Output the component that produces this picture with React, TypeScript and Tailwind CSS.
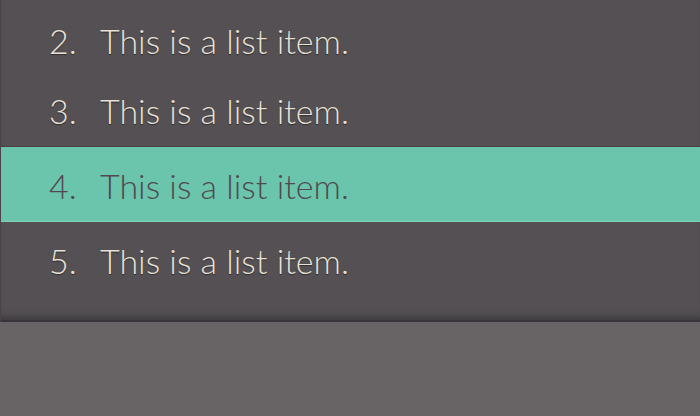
import React from 'react';

const items = [
  { n: 2, active: false, h: 'h-[73px]', pad: 'pt-[8px]' },
  { n: 3, active: false, h: 'h-[73px]', pad: 'pt-[2px]' },
  { n: 4, active: true, h: 'h-[76px]', pad: 'pt-[3px]' },
  { n: 5, active: false, h: 'h-[74px]', pad: 'pt-[3px]' },
];

const App = () => {
  return (
    <div className="w-[700px] h-[416px] overflow-hidden flex flex-col bg-[#686365] font-['Lato','Liberation_Sans',sans-serif]">
      {/* list panel */}
      <div className="h-[322px] flex flex-col bg-[#545053] border-l border-[#48444a] shadow-[inset_0_-8px_8px_-6px_rgba(0,0,0,0.35)] border-b-2 border-b-[#38343a]">
        {items.map((item) => (
          <div
            key={item.n}
            className={
              item.active
                ? `${item.h} ${item.pad} flex items-center bg-[#6bc5ac] border-t border-t-[#4b3f47] border-b border-b-[#7fd0b8] text-[#51494f]`
                : `${item.h} ${item.pad} flex items-center text-[#e9e1d6] [text-shadow:0_1px_1px_rgba(0,0,0,0.45)]`
            }
          >
            <span className="w-[51px] ml-[48px] text-[34px] font-light leading-none">{item.n}.</span>
            <span className="text-[34px] font-light leading-none">This is a list item.</span>
          </div>
        ))}
      </div>
    </div>
  );
};

export default App;
